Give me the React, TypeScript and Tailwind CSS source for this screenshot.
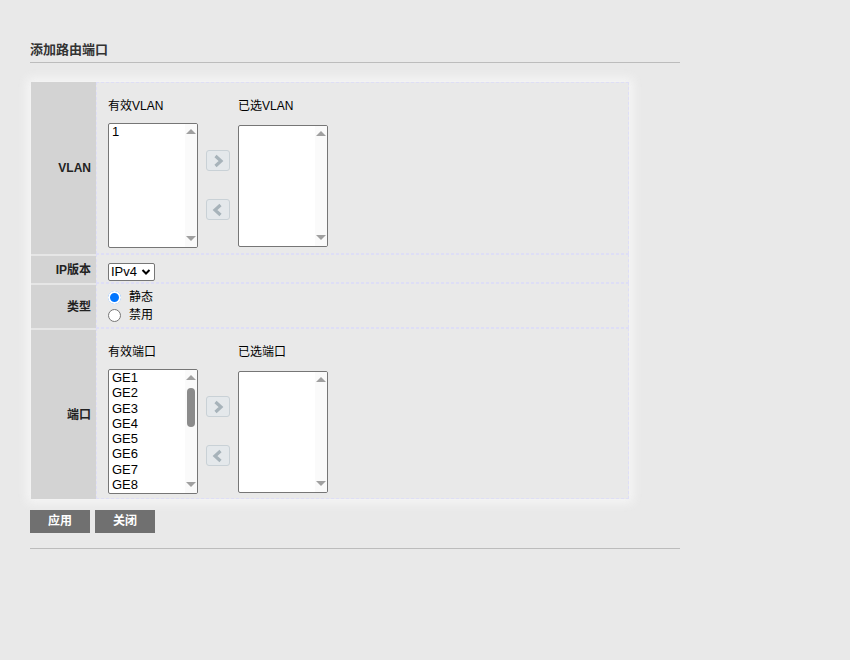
import React from 'react';

const font = { fontFamily: '"Liberation Sans", Arial, "Noto Sans CJK SC", sans-serif' };

interface ListBoxProps {
  items: string[];
  thumb?: boolean;
  className?: string;
}

const ListBox: React.FC<ListBoxProps> = ({ items, thumb, className }) => (
  <div className={`relative w-[90px] bg-white border border-[#767676] rounded-[2px] overflow-hidden ${className || ''}`}>
    <div className="pl-[3px] pr-[14px] text-[13px] leading-[15.3px] text-black">
      {items.map((item) => (
        <div key={item}>{item}</div>
      ))}
    </div>
    {/* fake scrollbar */}
    <div className="absolute right-0 top-0 bottom-0 w-[12px] bg-[#fafafa]">
      <div className="absolute left-[1px] top-[5px] w-0 h-0 border-l-[5px] border-r-[5px] border-b-[5px] border-l-transparent border-r-transparent border-b-[#a0a0a0]" />
      {thumb && (
        <div className="absolute left-[2px] top-[18px] w-[8px] h-[39px] rounded-full bg-[#8b8b8b]" />
      )}
      <div className="absolute left-[1px] bottom-[6px] w-0 h-0 border-l-[5px] border-r-[5px] border-t-[5px] border-l-transparent border-r-transparent border-t-[#a0a0a0]" />
    </div>
  </div>
);

const ArrowButton: React.FC<{ dir: 'right' | 'left' }> = ({ dir }) => (
  <div className="w-[24px] h-[21px] rounded-[3px] border border-[#c9d1d6] bg-[#e4e8eb] flex items-center justify-center">
    <svg width="14" height="14" viewBox="0 0 14 14">
      {dir === 'right' ? (
        <path d="M4.5 2 L10 7 L4.5 12" fill="none" stroke="#a7b3ba" strokeWidth="3.2" strokeLinejoin="miter" />
      ) : (
        <path d="M9.5 2 L4 7 L9.5 12" fill="none" stroke="#a7b3ba" strokeWidth="3.2" strokeLinejoin="miter" />
      )}
    </svg>
  </div>
);

interface DualListProps {
  leftTitle: string;
  rightTitle: string;
  items: string[];
  thumb?: boolean;
}

const DualList: React.FC<DualListProps> = ({ leftTitle, rightTitle, items, thumb }) => (
  <div className="pl-[11px] pt-[16px] flex">
    <div className="flex flex-col">
      <div className="text-[12px] leading-[14px] h-[24px] text-black">{leftTitle}</div>
      <ListBox items={items} thumb={thumb} className="h-[125px]" />
    </div>
    <div className="w-[40px] flex flex-col items-start pl-[8px] pt-[51px] gap-[28px]">
      <ArrowButton dir="right" />
      <ArrowButton dir="left" />
    </div>
    <div className="flex flex-col">
      <div className="text-[12px] leading-[14px] h-[26px] text-black">{rightTitle}</div>
      <ListBox items={[]} className="h-[122px]" />
    </div>
  </div>
);

const Row: React.FC<{ label: string; height: string; first?: boolean; children: React.ReactNode }> = ({
  label,
  height,
  first,
  children,
}) => (
  <div className={`flex ${height}`}>
    <div
      className={`w-[65px] shrink-0 bg-[#d3d3d3] flex items-center justify-end pr-[5px] text-[12px] font-bold text-[#222] ${
        first ? '' : 'border-t-2 border-[#e6e6e6]'
      }`}
    >
      {label}
    </div>
    <div className="flex-1 border border-dashed border-[#dedef6] bg-[#e9e9e9]">{children}</div>
  </div>
);

const Radio: React.FC<{ checked?: boolean; label: string }> = ({ checked, label }) => (
  <div className="flex items-center h-[18px]">
    {checked ? (
      <div className="w-[13px] h-[13px] rounded-full border-[1px] border-[#0075ff] bg-white flex items-center justify-center">
        <div className="w-[9px] h-[9px] rounded-full bg-[#0075ff] border-[2px] border-white box-content -m-[1px]" />
      </div>
    ) : (
      <div className="w-[13px] h-[13px] rounded-full border border-[#767676] bg-white" />
    )}
    <span className="ml-[8px] text-[12px] text-black">{label}</span>
  </div>
);

export default function App() {
  // only the rows visible in the scroll window
  const ports = ['GE1', 'GE2', 'GE3', 'GE4', 'GE5', 'GE6', 'GE7', 'GE8'];
  return (
    <div className="w-[850px] h-[660px] bg-[#e9e9e9] text-black" style={font}>
      <div className="pl-[30px] pt-[42px] w-[680px]">
        <div className="text-[13px] font-bold text-[#333] leading-[16px] pb-[4px] border-b border-[#bcbcbc]">
          添加路由端口
        </div>

        <div className="mt-[19px] ml-[1px] w-[598px] shadow-[0_0_10px_4px_rgba(247,247,247,0.95)]">
          <Row label="VLAN" height="h-[172px]" first>
            <DualList leftTitle="有效VLAN" rightTitle="已选VLAN" items={['1']} />
          </Row>
          <Row label="IP版本" height="h-[29px]">
            <div className="pl-[11px] pt-[4px]">
              <div className="inline-flex items-center h-[18px] w-[47px] border border-[#767676] rounded-[2px] bg-white text-[13px] pl-[2px]">
                IPv4
                <svg width="10" height="8" viewBox="0 0 10 8" className="ml-[4px]">
                  <path d="M1.5 2 L5 5.5 L8.5 2" fill="none" stroke="#000" strokeWidth="2" />
                </svg>
              </div>
            </div>
          </Row>
          <Row label="类型" height="h-[45px]">
            <div className="pl-[11px] pt-[4px] flex flex-col">
              <Radio checked label="静态" />
              <Radio label="禁用" />
            </div>
          </Row>
          <Row label="端口" height="h-[171px]">
            <DualList leftTitle="有效端口" rightTitle="已选端口" items={ports} thumb />
          </Row>
        </div>

        <div className="mt-[11px] flex gap-[5px]">
          <button className="w-[60px] h-[23px] leading-[23px] bg-[#707070] text-white text-[12px] font-bold">应用</button>
          <button className="w-[60px] h-[23px] leading-[23px] bg-[#707070] text-white text-[12px] font-bold">关闭</button>
        </div>

        <div className="mt-[15px] border-b border-[#bcbcbc]" />
      </div>
    </div>
  );
}
